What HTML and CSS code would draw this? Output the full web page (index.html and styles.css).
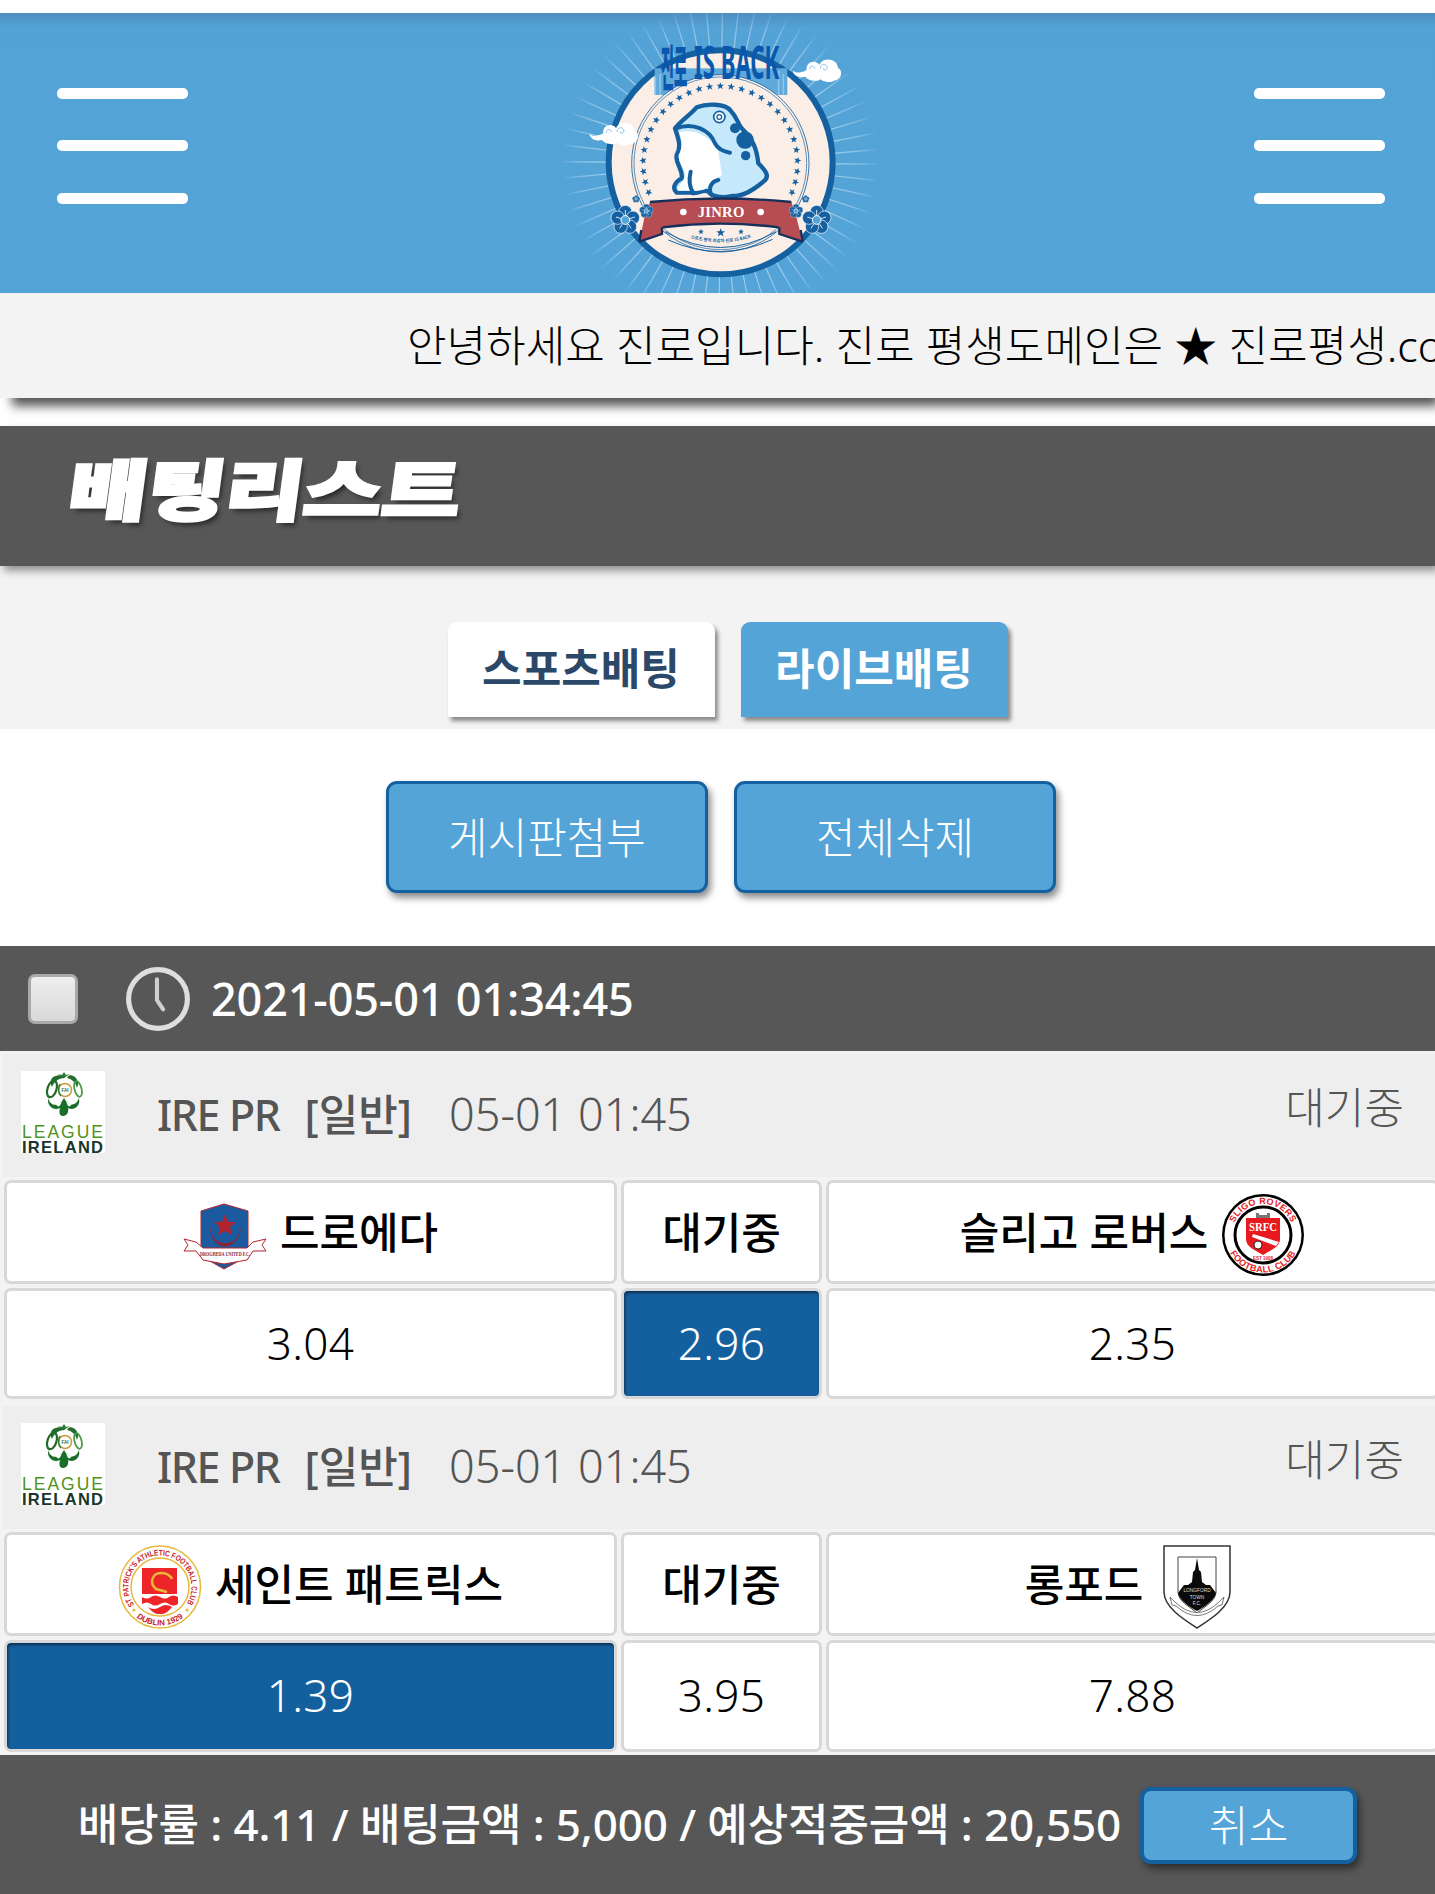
FILE: index.html
```html
<!DOCTYPE html>
<html lang="ko">
<head>
<meta charset="utf-8">
<title>배팅리스트</title>
<link rel="stylesheet" href="styles.css">
</head>
<body>
<svg class="defs" width="0" height="0" aria-hidden="true">
  <defs>
    <path id="star" d="M0-11 3-3.5 11-3.5 4.7 1.5 7 9.5 0 4.8-7 9.5-4.7 1.5-11-3.5-3-3.5Z" fill="#1460a0"/>
    <g id="flower">
      <circle cx="0" cy="-24" r="20" fill="#1460a0" stroke="#fff" stroke-width="2"/>
      <circle cx="23" cy="-7" r="20" fill="#1460a0" stroke="#fff" stroke-width="2"/>
      <circle cx="14" cy="20" r="20" fill="#1460a0" stroke="#fff" stroke-width="2"/>
      <circle cx="-14" cy="20" r="20" fill="#1460a0" stroke="#fff" stroke-width="2"/>
      <circle cx="-23" cy="-7" r="20" fill="#1460a0" stroke="#fff" stroke-width="2"/>
      <circle r="13" fill="#54a4d8" stroke="#fff" stroke-width="3"/>
      <path d="M0-13V-30M12-4 28-9M8 11 17 25M-8 11-17 25M-12-4-28-9" stroke="#fff" stroke-width="2.5"/>
    </g>
    <g id="cloud">
      <path d="M-74 4C-58 14-44 8-32 2-36-20-8-32 6-14 16-38 60-34 62-4 78 2 74 32 50 34 38 42 18 38 10 30-4 40-30 32-36 22-50 26-70 22-74 4Z" fill="#fff"/>
      <path d="M10-2C6-16 28-20 30-6 30 4 16 4 18-4M-22 0C-26-10-8-14-8-2" fill="none" stroke="#8cc4e6" stroke-width="3"/>
    </g>
    <g id="league">
      <path d="M43 1 45 4 49 3 43 7 37 3 41 4Z" fill="#2f7d32"/>
      <path d="M32 6C38 3 42 4 44 7 37 7 33 11 31 16 29 12 29 9 32 6ZM54 6C50 3 47 4 46 7 51 8 55 12 56 17 58 13 57 9 54 6Z" fill="#236e2c"/>
      <ellipse cx="31" cy="18" rx="4.500" ry="8.500" transform="rotate(18 31 18)" fill="none" stroke="#1f6b2a" stroke-width="2.200"/>
      <ellipse cx="57" cy="18" rx="3.500" ry="8" transform="rotate(-15 57 18)" fill="none" stroke="#4b9a45" stroke-width="1.800"/>
      <circle cx="44" cy="19" r="6.500" fill="#fff" stroke="#c99a3a" stroke-width="1.500"/>
      <path d="M39 13C37 16 37 22 40 25" fill="none" stroke="#2f7d32" stroke-width="1.500"/>
      <text x="44" y="21" class="lg-fai" text-anchor="middle">FAI</text>
      <path d="M27 27C30 37 39 35 43 27 47 35 55 36 58 27 60 36 52 40 47 37 48 41 46 45 42 45 38 45 38 41 39 37 33 40 26 36 27 27Z" fill="#1a6f28"/>
      <path d="M34 31C36 34 38 33 41 30 39 37 36 37 34 31ZM45 30C48 33 50 34 52 31 49 37 47 37 45 30Z" fill="#fff"/>
      <text x="41.500" y="67" class="lg-top" text-anchor="middle" textLength="81" lengthAdjust="spacing">LEAGUE</text>
      <text x="41.500" y="82" class="lg-bot" text-anchor="middle" textLength="81" lengthAdjust="spacing">IRELAND</text>
    </g>
  </defs>
</svg>

<header class="top">
  <div class="burger"><i></i><i></i><i></i></div>
  <svg class="logo" viewBox="3 39 1080 840" role="img" aria-label="진로 IS BACK JINRO">
    <defs>
      <radialGradient id="rayfade" gradientUnits="userSpaceOnUse" cx="541" cy="490" r="480">
        <stop offset=".7" stop-color="#e4f1fa" stop-opacity=".6"/>
        <stop offset=".88" stop-color="#d8ebf7" stop-opacity=".35"/>
        <stop offset="1" stop-color="#d8ebf7" stop-opacity="0"/>
      </radialGradient>
      <path id="lowarc" d="M425 705Q541 750 660 703"/>
    </defs>
    <circle cx="541" cy="490" r="410" fill="none" stroke="url(#rayfade)" stroke-width="140" stroke-dasharray="4 39"/>
    <circle cx="542" cy="487" r="336" fill="#faeee6" stroke="#1460a0" stroke-width="18"/>
    <rect x="344" y="205" width="398" height="80" fill="#5fa9dc"/>
    <path d="M346 285V230M360 285V222M730 285V222M716 285V214" stroke="#8cc4e6" stroke-width="5"/>
    <circle cx="541" cy="490" r="266" fill="#faeee6" stroke="#1460a0" stroke-width="2.5"/>
    <circle cx="541" cy="490" r="259" fill="none" stroke="#1460a0" stroke-width="2"/>
    <text x="362" y="258" class="logo-head" textLength="80" lengthAdjust="spacingAndGlyphs">진로</text>
    <text x="462" y="238" class="logo-head-en" textLength="256" lengthAdjust="spacingAndGlyphs">IS BACK</text>
    <g transform="translate(541 490)">
      <g><use href="#star" transform="rotate(0) translate(0 -232)"/><use href="#star" transform="rotate(8) translate(0 -232)"/><use href="#star" transform="rotate(16) translate(0 -232)"/><use href="#star" transform="rotate(24) translate(0 -232)"/><use href="#star" transform="rotate(32) translate(0 -232)"/><use href="#star" transform="rotate(40) translate(0 -232)"/><use href="#star" transform="rotate(48) translate(0 -232)"/><use href="#star" transform="rotate(56) translate(0 -232)"/><use href="#star" transform="rotate(64) translate(0 -232)"/><use href="#star" transform="rotate(72) translate(0 -232)"/><use href="#star" transform="rotate(80) translate(0 -232)"/><use href="#star" transform="rotate(88) translate(0 -232)"/><use href="#star" transform="rotate(96) translate(0 -232)"/><use href="#star" transform="rotate(104) translate(0 -232)"/><use href="#star" transform="rotate(112) translate(0 -232)"/><use href="#star" transform="rotate(-8) translate(0 -232)"/><use href="#star" transform="rotate(-16) translate(0 -232)"/><use href="#star" transform="rotate(-24) translate(0 -232)"/><use href="#star" transform="rotate(-32) translate(0 -232)"/><use href="#star" transform="rotate(-40) translate(0 -232)"/><use href="#star" transform="rotate(-48) translate(0 -232)"/><use href="#star" transform="rotate(-56) translate(0 -232)"/><use href="#star" transform="rotate(-64) translate(0 -232)"/><use href="#star" transform="rotate(-72) translate(0 -232)"/><use href="#star" transform="rotate(-80) translate(0 -232)"/><use href="#star" transform="rotate(-88) translate(0 -232)"/><use href="#star" transform="rotate(-96) translate(0 -232)"/><use href="#star" transform="rotate(-104) translate(0 -232)"/><use href="#star" transform="rotate(-112) translate(0 -232)"/></g>
    </g>
    <path d="M470 322C500 310 555 310 572 332 590 350 590 365 605 385 640 420 650 445 655 490 680 515 690 530 670 545 640 570 610 590 575 588 545 595 515 590 505 575 490 565 470 585 455 578L410 578C395 565 405 545 425 535 430 510 405 490 410 465 425 440 415 415 405 385 425 360 450 345 470 322Z" fill="#c5e8fa" stroke="#1460a0" stroke-width="13" stroke-linejoin="round"/>
    <path d="M418 396C470 385 510 410 535 455L546 525C525 535 510 550 495 568 475 575 450 572 440 572L414 572C415 555 430 545 435 530 438 510 415 490 416 465 430 440 425 420 418 396Z" fill="#fff"/>
    <path d="M408 385C460 365 510 390 525 430 535 450 555 455 570 458M452 515C445 545 450 565 460 578M535 540C510 545 505 570 515 585" fill="none" stroke="#1460a0" stroke-width="12" stroke-linecap="round"/>
    <circle cx="585" cy="385" r="15" fill="#1460a0"/><circle cx="615" cy="420" r="26" fill="#1460a0"/><circle cx="617" cy="467" r="14" fill="#1460a0"/>
    <circle cx="538" cy="351" r="17" fill="#fff" stroke="#1460a0" stroke-width="5"/><circle cx="538" cy="351" r="7" fill="none" stroke="#1460a0" stroke-width="4"/>
    <path d="M375 695Q541 790 708 695M385 720Q541 790 698 718" fill="none" stroke="#1460a0" stroke-width="3"/>
    <use href="#star" transform="translate(483 695) scale(.8)"/><use href="#star" transform="translate(542 698) scale(1.2)"/><use href="#star" transform="translate(603 695) scale(.8)"/>
    <text class="logo-arc"><textPath href="#lowarc" startOffset="50%" text-anchor="middle">스포츠 팬의 최강자 진로 IS BACK</textPath></text>
    <path d="M330 606Q541 585 754 606L766 640 788 725 718 702 716 682Q541 660 368 682L366 702 298 725 316 640Z" fill="#b54d52"/>
    <path d="M330 606Q541 585 754 606M368 682Q541 660 716 682M298 725 366 702V682M788 725 718 702V682M298 725 304 690M788 725 782 690" fill="none" stroke="#17305a" stroke-width="7"/>
    <circle cx="430" cy="636" r="10" fill="#fff"/><circle cx="662" cy="636" r="10" fill="#fff"/>
    <text x="543" y="651" class="logo-jinro" text-anchor="middle" textLength="140">JINRO</text>
    <use href="#flower" transform="translate(256 660)"/><use href="#flower" transform="translate(830 660)"/>
    <use href="#flower" transform="translate(319 633) scale(.48)"/><use href="#flower" transform="translate(768 633) scale(.48)"/>
    <use href="#flower" transform="translate(288 597) scale(.26)"/><use href="#flower" transform="translate(797 597) scale(.26)"/>
    <use href="#cloud" transform="translate(222 398)"/><use href="#cloud" transform="translate(832 208)"/>
  </svg>
  <div class="burger"><i></i><i></i><i></i></div>
</header>

<div class="ticker"><span>안녕하세요 진로입니다. 진로 평생도메인은 ★ 진로평생.com 입니다.</span></div>

<h1 class="page-title"><span>배팅리스트</span></h1>

<nav class="tabs">
  <a class="tab tab-on">스포츠배팅</a>
  <a class="tab tab-off">라이브배팅</a>
</nav>

<div class="actions">
  <button class="btn btn-lg">게시판첨부</button>
  <button class="btn btn-lg">전체삭제</button>
</div>

<div class="datebar">
  <span class="check"></span>
  <svg class="clock" viewBox="0 0 64 64"><circle cx="32" cy="32" r="28.500" fill="none" stroke="#dedede" stroke-width="5"/><path d="M31 13V33L37 42" fill="none" stroke="#cfcfcf" stroke-width="4" stroke-linecap="round"/></svg>
  <span class="date">2021-05-01 01:34:45</span>
</div>

<section class="list">
  <article class="game">
    <div class="league">
      <svg class="lg-logo" viewBox="0 0 84 82"><rect width="84" height="82" fill="#fff"/><use href="#league"/></svg>
      <div class="lg-info"><b class="lg-name">IRE PR</b><b class="lg-type">[일반]</b><span class="lg-time">05-01 01:45</span></div>
      <span class="lg-status">대기중</span>
    </div>
    <div class="row">
      <div class="cell team">
        <svg class="crest" viewBox="0 0 84 84">
          <path d="M18 18 41 11 65 18V63L41 76 18 63Z" fill="#1c5aa0" stroke="#b3242e" stroke-width="1"/>
          <path d="M27 33C27 60 57 60 58 33 55 47 51 50 42 50 34 50 29 46 27 33Z" fill="#8e2330"/>
          <path d="M42 21 45 29 53 29 47 34 49 42 42 38 35 42 37 34 31 29 39 29Z" fill="#b3242e"/>
          <path d="M1 46 13 49 20 55 64 55 70 49 83 46 79 52 83 58 70 58 64 67 41 71 20 67 13 58 1 58 5 52Z" fill="#fff" stroke="#b3242e" stroke-width="1"/>
          <text x="42" y="63" class="cr-dr" text-anchor="middle" textLength="50" lengthAdjust="spacingAndGlyphs">DROGHEDA UNITED F.C.</text>
        </svg>
        <span>드로에다</span>
      </div>
      <div class="cell team"><span>대기중</span></div>
      <div class="cell team">
        <span>슬리고 로버스</span>
        <svg class="crest" viewBox="0 0 84 84">
          <defs><path id="sl-top" d="M11 42A31 31 0 0 1 73 42"/><path id="sl-bot" d="M4.500 42A37.500 37.500 0 0 0 79.500 42"/></defs>
          <circle cx="42" cy="42" r="41" fill="#000"/><circle cx="42" cy="42" r="38.500" fill="#fff"/>
          <circle cx="42" cy="42" r="28" fill="#fff" stroke="#000" stroke-width="3"/>
          <text class="cr-sl"><textPath href="#sl-top" startOffset="50%" text-anchor="middle">SLIGO ROVERS</textPath></text>
          <text class="cr-sl"><textPath href="#sl-bot" startOffset="50%" text-anchor="middle">FOOTBALL CLUB</textPath></text>
          <path d="M35 25V20H38V22H46V20H49V25Z" fill="#777"/>
          <path d="M25 25H59V46C59 54 50 57 42 62 34 57 25 54 25 46Z" fill="#e8191f"/>
          <path d="M32 41 58 49 55 53 31 44Z" fill="#fff"/><circle cx="37" cy="52" r="4" fill="#fff" stroke="#000" stroke-width=".8"/>
          <text x="42" y="38" class="cr-srfc" text-anchor="middle" textLength="28" lengthAdjust="spacingAndGlyphs">SRFC</text>
          <text x="42" y="67" class="cr-est" text-anchor="middle">EST 1908</text>
        </svg>
      </div>
    </div>
    <div class="row row-odds">
      <div class="cell odd">3.04</div>
      <div class="cell odd odd-on">2.96</div>
      <div class="cell odd">2.35</div>
    </div>
  </article>

  <article class="game">
    <div class="league">
      <svg class="lg-logo" viewBox="0 0 84 82"><rect width="84" height="82" fill="#fff"/><use href="#league"/></svg>
      <div class="lg-info"><b class="lg-name">IRE PR</b><b class="lg-type">[일반]</b><span class="lg-time">05-01 01:45</span></div>
      <span class="lg-status">대기중</span>
    </div>
    <div class="row">
      <div class="cell team">
        <svg class="crest" viewBox="0 0 84 84">
          <defs><path id="sp-top" d="M16.200 60A31.500 31.500 0 1 1 67.800 60"/><path id="sp-bot" d="M10.500 64A38.500 38.500 0 0 0 73.500 64"/></defs>
          <ellipse cx="42" cy="42" rx="40.500" ry="41" fill="#fff" stroke="#e8b93a" stroke-width="1.500"/>
          <circle cx="42" cy="42" r="29" fill="#fff" stroke="#e8b93a" stroke-width="1.500"/>
          <text class="cr-sp"><textPath href="#sp-top" textLength="135" lengthAdjust="spacingAndGlyphs">ST PATRICK'S ATHLETIC FOOTBALL CLUB</textPath></text>
          <text class="cr-sp cr-sp2"><textPath href="#sp-bot" startOffset="50%" text-anchor="middle">DUBLIN 1929</textPath></text>
          <circle cx="16" cy="65" r="1.500" fill="#e8b93a"/><circle cx="69" cy="65" r="1.500" fill="#e8b93a"/>
          <rect x="24" y="23" width="35" height="26" fill="#ee2528"/>
          <path d="M49 47 38 44C31 38 34 28 43 28 48 28 52 30 54 34" fill="none" stroke="#e8b93a" stroke-width="2.500"/>
          <path d="M24 52Q29 55 33 52T42 52 51 52 60 52V59Q55 62 51 59T42 59 33 59 24 59Z" fill="#ee2528"/>
          <path d="M30 62Q36 66 42 62T54 62Q48 70 42 69 36 70 30 62Z" fill="#ee2528"/>
        </svg>
        <span>세인트 패트릭스</span>
      </div>
      <div class="cell team"><span>대기중</span></div>
      <div class="cell team">
        <span>롱포드</span>
        <svg class="crest" viewBox="0 0 84 84">
          <path d="M8 1H74V47C74 62 55 74 41 83 27 74 8 62 8 47Z" fill="#fff" stroke="#333" stroke-width="1.500"/>
          <path d="M22 12H60V47C60 56 48 62 41 68 34 62 22 56 22 47Z" fill="#fff" stroke="#444" stroke-width="1"/>
          <path d="M41 13 43 25 45 27 46 37 50 40 54 40 60 48C58 56 48 62 41 66 34 62 24 56 22 48L28 40 32 40 36 37 37 27 39 25Z" fill="#0a0a0a"/>
          <text x="41" y="47" class="cr-lf" text-anchor="middle">LONGFORD</text>
          <text x="41" y="54" class="cr-lf" text-anchor="middle">TOWN</text>
          <text x="41" y="60" class="cr-lf" text-anchor="middle">F.C.</text>
          <path d="M14 52 19 57Q41 78 63 57L68 52 66 60 62 61Q41 80 20 61L16 60Z" fill="#fff" stroke="#555" stroke-width=".8"/>
        </svg>
      </div>
    </div>
    <div class="row row-odds row-odds-b">
      <div class="cell odd odd-on">1.39</div>
      <div class="cell odd">3.95</div>
      <div class="cell odd">7.88</div>
    </div>
  </article>
</section>

<footer class="foot">
  <span class="sum">배당률 : 4.11 / 배팅금액 : 5,000 / 예상적중금액 : 20,550</span>
  <button class="btn btn-sm">취소</button>
</footer>
</body>
</html>
```

FILE: styles.css
```css
* { box-sizing: border-box; }
html, body { margin: 0; padding: 0; }
body {
  width: 1435px;
  height: 1894px;
  overflow: hidden;
  background: #fff;
  font-family: "Noto Sans", "Noto Sans CJK KR", sans-serif;
  color: #000;
}
.defs { position: absolute; }

.top {
  margin-top: 13px;
  height: 280px;
  padding: 0 50px 0 57px;
  display: flex;
  justify-content: space-between;
  align-items: flex-start;
  background: linear-gradient(#4d8fbf 0, #54a3d7 16px, #54a4d8 100%);
}
.burger { width: 131px; padding-top: 75px; display: flex; flex-direction: column; gap: 41.400px; }
.burger i { display: block; height: 11px; background: #fff; border-radius: 5px; }
.logo { width: 360px; height: 280px; display: block; }
.logo-head { font: 900 146px "Noto Sans CJK KR", sans-serif; fill: #0a58ad; }
.logo-head-en { font: 700 142px "Noto Sans", sans-serif; fill: #0a58ad; }
.logo-arc { font: 700 13px "Noto Sans CJK KR", sans-serif; fill: #1460a0; }
.logo-jinro { font: 700 44px "Liberation Serif", serif; fill: #fff; }

.ticker {
  height: 105px;
  padding: 0 0 4px 407px;
  display: flex;
  align-items: center;
  white-space: nowrap;
  overflow: hidden;
  background: #f3f3f3;
  font-size: 43px;
  font-weight: 300;
  box-shadow: 8px 12px 10px -4px #555;
  position: relative;
}
.page-title {
  margin: 28px 0 0;
  height: 140px;
  padding-left: 70px;
  display: flex;
  align-items: center;
  background: #575757;
  box-shadow: 4px 5px 8px rgba(0, 0, 0, .4);
  position: relative;
}
.page-title span {
  display: block;
  margin-top: -20px;
  color: #fff;
  font: 900 66px "Noto Sans CJK KR", sans-serif;
  -webkit-text-stroke: 3px #fff;
  transform: scaleX(1.29) skewX(-6deg);
  transform-origin: left center;
  text-shadow: 3px 4px 5px rgba(0, 0, 0, .55);
}

.tabs {
  height: 163px;
  padding: 56px 0 0 20px;
  display: flex;
  justify-content: center;
  align-items: flex-start;
  gap: 26px;
  background: #f3f3f3;
}
.tab {
  width: 267px;
  height: 95px;
  padding-bottom: 6px;
  display: flex;
  align-items: center;
  justify-content: center;
  border-radius: 9px 9px 0 0;
  font-size: 43px;
  font-weight: 700;
  box-shadow: 3px 4px 4px #888;
}
.tab-on { background: #fff; color: #2b4869; }
.tab-off { background: #54a4d8; color: #fff; }

.actions {
  height: 217px;
  padding: 52px 0 0 7px;
  display: flex;
  justify-content: center;
  align-items: flex-start;
  gap: 26px;
}
.btn {
  display: flex;
  align-items: center;
  justify-content: center;
  padding: 0 0 4px;
  border: 3px solid #1460a0;
  border-radius: 11px;
  background: #54a4d8;
  color: #fff;
  font-family: inherit;
  font-size: 43px;
  font-weight: 300;
  box-shadow: 3px 5px 7px rgba(0, 0, 0, .45);
}
.btn-lg { width: 322px; height: 112px; }
.btn-sm { width: 217px; height: 77px; border-width: 4px; }

.datebar {
  height: 105px;
  padding-left: 28px;
  display: flex;
  align-items: center;
  background: #575757;
  color: #fff;
}
.check {
  width: 50px;
  height: 50px;
  border: 3px solid #a9a9a9;
  border-radius: 7px;
  background: linear-gradient(#eee, #d8d8d8);
}
.clock { width: 66px; height: 66px; margin-left: 47px; }
.date { margin-left: 20px; font-size: 45px; font-weight: 500; letter-spacing: -.15px; }

.list { padding: 3px 0 3px 3px; background: #f3f3f3; display: flex; flex-direction: column; gap: 7px; }
.game { display: flex; flex-direction: column; }
.league {
  height: 123px;
  padding-left: 18px;
  display: flex;
  align-items: flex-start;
  background: #eee;
  color: #555;
  position: relative;
}
.lg-logo { width: 84px; height: 82px; margin-top: 17px; flex: none; }
.lg-info { display: flex; align-items: baseline; margin: 31px 0 0 52px; font-size: 43px; line-height: 58px; }
.lg-name { font-weight: 500; letter-spacing: -1.400px; }
.lg-type { font-weight: 500; margin-left: 25px; }
.lg-time { font-weight: 300; font-size: 45px; margin-left: 37px; }
.lg-status { position: absolute; right: 31px; top: 25px; font-size: 43px; font-weight: 300; line-height: 58px; }
.lg-top { font: 400 17.500px "Liberation Sans", sans-serif; fill: #4f9420; }
.lg-bot { font: 700 16.500px "Liberation Sans", sans-serif; fill: #17352a; }
.lg-fai { font: 700 4.500px "Liberation Sans", sans-serif; fill: #2f6b2f; }

.row {
  margin-top: 3px;
  margin-left: 1px;
  height: 104px;
  display: grid;
  grid-template-columns: 613px 201px 613px;
  column-gap: 4px;
}
.row-odds { margin-top: 4px; height: 111px; }
.row-odds-b { height: 112px; }
.cell {
  display: flex;
  align-items: center;
  justify-content: center;
  gap: 13px;
  background: #fff;
  border: 3px solid #d8d8d8;
  border-radius: 7px;
}
.team { font-size: 43px; font-weight: 500; }
.team span { margin-bottom: 4px; }
.crest { width: 84px; height: 84px; flex: none; margin-top: 6px; }
.odd { font-size: 44px; font-weight: 300; padding-bottom: 2px; letter-spacing: .4px; }
.odd-on { background: #14609f; color: #fff; box-shadow: inset 1px 2px 3px rgba(0, 0, 0, .5); }

.cr-dr { font: 700 5.500px "Liberation Serif", serif; fill: #8e2330; }
.cr-sl { font: 700 9px "Liberation Sans", sans-serif; fill: #e8191f; letter-spacing: .3px; }
.cr-srfc { font: 700 12px "Liberation Serif", serif; fill: #fff; }
.cr-est { font: 700 4.500px "Liberation Sans", sans-serif; fill: #e8191f; }
.cr-sp { font: 700 8px "Liberation Sans", sans-serif; fill: #c8242a; }
.cr-sp2 { font-size: 8px; }
.cr-lf { font: 400 4.800px "Liberation Sans", sans-serif; fill: #ddd; }

.foot {
  height: 139px;
  display: flex;
  align-items: flex-start;
  justify-content: center;
  gap: 19px;
  background: #575757;
  color: #fff;
  padding-top: 32px;
}
.sum { margin-top: -1px; font-size: 44px; font-weight: 500; line-height: 77px; white-space: nowrap; letter-spacing: -.12px; }
```
